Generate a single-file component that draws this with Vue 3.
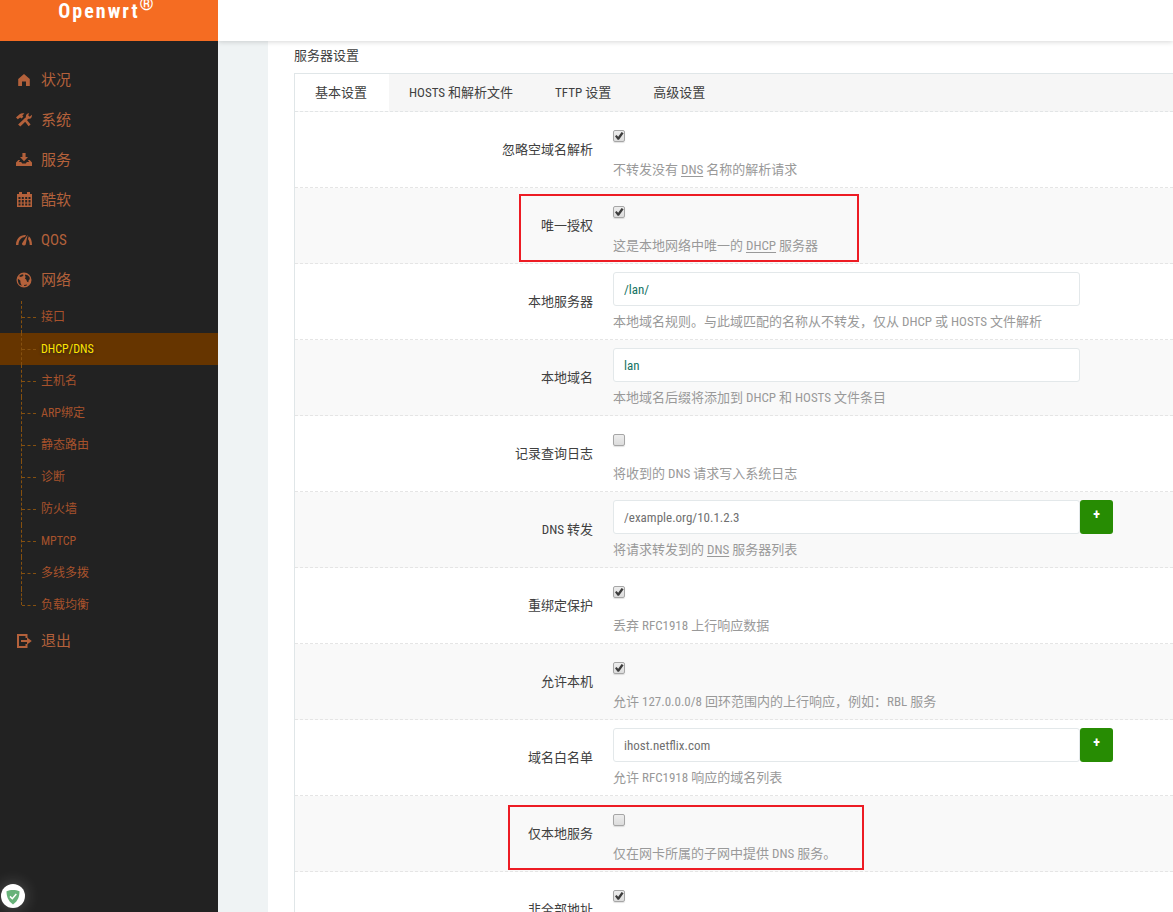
<script setup>
import { ref } from 'vue'

const menu = [
  { icon: 'home', label: '状况' },
  { icon: 'tools', label: '系统' },
  { icon: 'download', label: '服务' },
  { icon: 'calendar', label: '酷软' },
  { icon: 'gauge', label: 'QOS' },
  {
    icon: 'globe',
    label: '网络',
    children: ['接口', 'DHCP/DNS', '主机名', 'ARP绑定', '静态路由', '诊断', '防火墙', 'MPTCP', '多线多拨', '负载均衡'],
  },
  { icon: 'exit', label: '退出' },
]
const activeItem = 'DHCP/DNS'

const tabs = ['基本设置', 'HOSTS 和解析文件', 'TFTP 设置', '高级设置']
const activeTab = ref(tabs[0])

// Hints are lists of parts; a part with `abbr` is underlined.
const rows = ref([
  { id: 'domainneeded', label: '忽略空域名解析', type: 'check', value: true, hint: ['不转发没有 ', { abbr: 'DNS' }, ' 名称的解析请求'] },
  { id: 'authoritative', label: '唯一授权', type: 'check', value: true, mark: 'mark-a', hint: ['这是本地网络中唯一的 ', { abbr: 'DHCP' }, ' 服务器'] },
  { id: 'local', label: '本地服务器', type: 'text', value: '/lan/', hint: ['本地域名规则。与此域匹配的名称从不转发，仅从 DHCP 或 HOSTS 文件解析'] },
  { id: 'domain', label: '本地域名', type: 'text', value: 'lan', hint: ['本地域名后缀将添加到 DHCP 和 HOSTS 文件条目'] },
  { id: 'logqueries', label: '记录查询日志', type: 'check', value: false, hint: ['将收到的 DNS 请求写入系统日志'] },
  { id: 'server', label: 'DNS 转发', type: 'list', value: '', placeholder: '/example.org/10.1.2.3', hint: ['将请求转发到的 ', { abbr: 'DNS' }, ' 服务器列表'] },
  { id: 'rebind', label: '重绑定保护', type: 'check', value: true, hint: ['丢弃 RFC1918 上行响应数据'] },
  { id: 'localhost', label: '允许本机', type: 'check', value: true, hint: ['允许 127.0.0.0/8 回环范围内的上行响应，例如：RBL 服务'] },
  { id: 'whitelist', label: '域名白名单', type: 'list', value: '', placeholder: 'ihost.netflix.com', hint: ['允许 RFC1918 响应的域名列表'] },
  { id: 'localservice', label: '仅本地服务', type: 'check', value: false, mark: 'mark-b', hint: ['仅在网卡所属的子网中提供 DNS 服务。'] },
  { id: 'nonwildcard', label: '非全部地址', type: 'check', value: true },
])
</script>

<template>
  <div class="shell">
    <aside class="sidebar">
      <a class="brand" href="#"><span>Openwrt</span><sup>®</sup></a>
      <nav>
        <ul class="menu">
          <li v-for="item in menu" :key="item.label">
            <a class="menu-link" href="#">
              <svg class="icon" viewBox="0 0 16 16" aria-hidden="true">
                <path v-if="item.icon === 'home'" d="M8 2 2.2 7V14H6V9.500h4V14h3.800V7z" />
                <g v-else-if="item.icon === 'tools'">
                  <path d="M0 5.600 1 4.400 3.600 2.200C5 1 7 .9 8.400 1.500L6.300 3.400 7.400 4.700 5.400 6.500 4.200 5.400 1.800 7.200z" />
                  <path d="M7.600 7.800 9.300 6 14.600 12.400 12.600 14.200z" />
                  <path d="M15.800 2.800c.5 2.400-1.100 4.300-3.400 4L4.300 14.500 2.100 12.500 9.900 5.200C9.500 3.200 11 1 13.200 1.200L12.200 3.200l1.500 1.500z" />
                </g>
                <g v-else-if="item.icon === 'download'">
                  <path d="M6.400 1h3.200v4H12L8 9.300 4 5h2.400z" />
                  <path d="M2.300 8h1.800L2.800 10h2.400l1 1.500h3.600l1-1.500h2.400L11.900 8h1.800L16 10.600V14H0v-3.400z" />
                </g>
                <g v-else-if="item.icon === 'calendar'">
                  <path fill-rule="evenodd" d="M1 2h2V0h3v2h5V0h3v2h2v13H1zM2.500 5v2h2V5zm3.300 0v2h2V5zm3.400 0v2h2V5zm3.300 0v2h2V5zM2.500 8v2.500h2V8zm3.300 0v2.500h2V8zm3.400 0v2.500h2V8zm3.300 0v2.500h2V8zM2.500 11.500v2h2v-2zm3.300 0v2h2v-2zm3.400 0v2h2v-2zm3.300 0v2h2v-2z" />
                </g>
                <g v-else-if="item.icon === 'gauge'">
                  <path d="M0 13C0 7 4 2.800 10 3.100L9 5C5.600 5 2.600 8.200 2.400 13z" />
                  <path d="M11.600 2.800 9.700 12.500C9 14 5.700 13.600 6 11.500z" />
                  <path d="M12.800 4.200C15 6 16 9 16 13h-2.300c0-2.600-.5-4.600-1.700-6z" />
                </g>
                <g v-else-if="item.icon === 'globe'">
                  <path fill-rule="evenodd" d="M8 .5a7.500 7.500 0 1 0 0 15A7.500 7.500 0 0 0 8 .5zM6.200 2.200 3.300 3.800 4 5l2.200-.4L7.800 3zM9.300 2.400 8.800 4l1 .8-.9 1.800 1.300 1 .9 2.200 1.200.5.5-2.200 1-.8-.3-2.300L11.600 3.300zM1.900 6.800 4.300 8.500 4.500 11l1.300 2.800L3.300 12.400C2.200 11 1.700 9 1.900 6.800zM8 13l3-.6-.6 1.300-2.300.4z" />
                </g>
                <g v-else>
                  <path d="M10.500 5V2H2v12h8.500v-3" fill="none" stroke="currentColor" stroke-width="2" />
                  <path d="M5 7h6V4.400L15.800 8 11 11.600V9H5z" />
                </g>
              </svg>
              <span>{{ item.label }}</span>
            </a>
            <ul v-if="item.children" class="submenu">
              <li v-for="child in item.children" :key="child">
                <a href="#" :class="{ active: child === activeItem }">{{ child }}</a>
              </li>
            </ul>
          </li>
        </ul>
      </nav>
    </aside>

    <div class="main">
      <header class="topbar"></header>
      <main class="page">
        <form class="sheet" @submit.prevent>
          <h3>服务器设置</h3>
          <div class="panel">
            <div class="tabs" role="tablist">
              <button
                v-for="tab in tabs"
                :key="tab"
                type="button"
                role="tab"
                :aria-selected="tab === activeTab"
                :class="{ current: tab === activeTab }"
                @click="activeTab = tab"
              >{{ tab }}</button>
            </div>
            <div v-for="row in rows" :key="row.id" class="row">
              <label :for="row.id">{{ row.label }}</label>
              <div class="field">
                <div class="control">
                  <input v-if="row.type === 'check'" :id="row.id" v-model="row.value" type="checkbox" />
                  <input v-else :id="row.id" v-model="row.value" type="text" :placeholder="row.placeholder" />
                  <button v-if="row.type === 'list'" type="button" class="add">+</button>
                </div>
                <p v-if="row.hint" class="hint">
                  <template v-for="(part, i) in row.hint" :key="i"><abbr v-if="part.abbr">{{ part.abbr }}</abbr><template v-else>{{ part }}</template></template>
                </p>
              </div>
              <span v-if="row.mark" class="mark" :class="row.mark"></span>
            </div>
          </div>
        </form>
      </main>
    </div>

    <div class="shield">
      <svg viewBox="0 0 24 24" aria-hidden="true">
        <path d="M12 6c2.300 0 4.600.5 6.500 1.300 0 5.200-1.500 9.700-6.500 13.200-5-3.500-6.500-8-6.500-13.200C7.400 6.500 9.700 6 12 6z" fill="#67b279" />
        <path d="M9 12.400l2.300 2.300 4-4.700" fill="none" stroke="#fff" stroke-width="1.500" />
      </svg>
    </div>
  </div>
</template>

<style>
body {
  overflow: hidden;
  background: #eff3f4;
}
</style>

<style scoped>
* {
  box-sizing: border-box;
}
.shell {
  display: flex;
  height: 100vh;
  overflow: hidden;
  font-family: "Roboto Condensed", "Liberation Sans Narrow", Roboto, "Noto Sans CJK SC", sans-serif;
  font-size: 13px;
  color: #404040;
}
ul {
  list-style: none;
  margin: 0;
  padding: 0;
}
a {
  text-decoration: none;
}
.sidebar {
  position: relative;
  z-index: 1;
  flex: 0 0 218px;
  background: #222;
}
.brand {
  display: flex;
  justify-content: center;
  height: 41px;
  padding-right: 4px;
  background: #f56c22;
  color: #fff;
  font-size: 20px;
  font-weight: 700;
  line-height: 22px;
  letter-spacing: 2px;
}
.brand sup {
  font-size: 18px;
  line-height: 8px;
}
.menu {
  padding-top: 19px;
}
.menu-link {
  display: flex;
  align-items: center;
  gap: 9px;
  height: 40px;
  padding-left: 16px;
  color: #b4613b;
  font-size: 15px;
  line-height: 40px;
}
.icon {
  width: 16px;
  height: 16px;
  fill: currentColor;
}
.submenu {
  padding-top: 1px;
}
.submenu li {
  position: relative;
}
.submenu li::before {
  content: "";
  position: absolute;
  top: 0;
  left: 21px;
  height: 32px;
  border-left: 1px dashed #85500f;
}
.submenu li:last-child::before {
  height: 16px;
}
.submenu li::after {
  content: "";
  position: absolute;
  top: 16px;
  left: 22px;
  width: 14px;
  border-top: 1px dashed #85500f;
}
.submenu a {
  display: block;
  height: 32px;
  padding-left: 41px;
  color: #a8522c;
  font-size: 12px;
  line-height: 32px;
}
.submenu a.active {
  background: #663500;
  color: #ffe400;
  text-shadow: 0 1px 3px #222;
}
.main {
  display: flex;
  flex: 1;
  flex-direction: column;
  min-width: 0;
}
.topbar {
  position: relative;
  flex: 0 0 41px;
  background: #fff;
  box-shadow: 0 1px 5px rgba(0, 0, 0, 0.16);
}
.page {
  flex: 1;
  min-height: 0;
  padding-left: 50px;
  overflow: hidden;
}
.sheet {
  padding: 5px 0 20px 26px;
  background: #fff;
}
h3 {
  margin: 0 0 7px;
  font-size: 13px;
  font-weight: 400;
  line-height: 20px;
}
.panel {
  border-top: 1px solid #e0e6e8;
  border-left: 1px solid #e0e6e8;
}
.tabs {
  display: flex;
  height: 38px;
  border-bottom: 1px dashed #e2e5e6;
  background: #f6f6f6;
}
.tabs button {
  padding: 0 22px 2px 20px;
  border: 0;
  background: transparent;
  color: inherit;
  font: inherit;
}
.tabs button.current {
  background: #fff;
}
.row {
  position: relative;
  display: flex;
  gap: 20px;
  height: 76px;
  border-bottom: 1px dashed #e5e5e5;
}
.row:nth-child(odd) {
  background: #f9f9f9;
}
.row > label {
  flex: 0 0 298px;
  line-height: 76px;
  text-align: right;
}
.field {
  flex: 1;
  min-width: 0;
  padding-top: 8px;
}
.control {
  display: flex;
  align-items: center;
  height: 34px;
}
input[type="text"] {
  width: 100%;
  max-width: 467px;
  height: 34px;
  padding: 0 10px;
  border: 1px solid #e3e8ea;
  border-radius: 3px;
  background: #fff;
  color: #147363;
  font: inherit;
}
input::placeholder {
  color: #707070;
  opacity: 1;
}
input[type="checkbox"] {
  appearance: none;
  align-self: flex-start;
  width: 12px;
  height: 12px;
  margin: 10px 0 0;
  border: 1px solid #a6a6a6;
  border-radius: 2px;
  background: linear-gradient(#ededed, #dcdcdc);
  box-shadow: 0 1px 1px rgba(0, 0, 0, 0.12);
}
input[type="checkbox"]:checked::before {
  content: "";
  display: block;
  width: 10px;
  height: 10px;
  background: #3c3c3c;
  clip-path: polygon(10% 52%, 25% 40%, 42% 57%, 76% 10%, 96% 22%, 50% 88%, 36% 88%);
}
.add {
  flex: 0 0 33px;
  height: 34px;
  padding: 0 0 6px;
  border: 0;
  border-radius: 3px;
  background: #278c03;
  color: #fff;
  font: inherit;
  font-size: 14px;
  font-weight: 700;
}
.hint {
  margin: 6px 0 0;
  color: #999;
  line-height: 20px;
  white-space: nowrap;
}
.hint abbr {
  text-decoration: underline;
  text-underline-offset: 2px;
}
.mark {
  position: absolute;
  border: 2px solid #ed1c24;
  pointer-events: none;
}
.mark-a {
  top: 6px;
  left: 224px;
  width: 340px;
  height: 68px;
}
.mark-b {
  top: 9px;
  left: 213px;
  width: 356px;
  height: 65px;
}
.shield {
  position: absolute;
  z-index: 2;
  bottom: 4px;
  left: 1px;
  width: 24px;
  height: 24px;
  border-radius: 50%;
  background: #fff;
  box-shadow: 0 0 16px rgba(255, 255, 255, 0.25);
}
.shield svg {
  display: block;
}
</style>
